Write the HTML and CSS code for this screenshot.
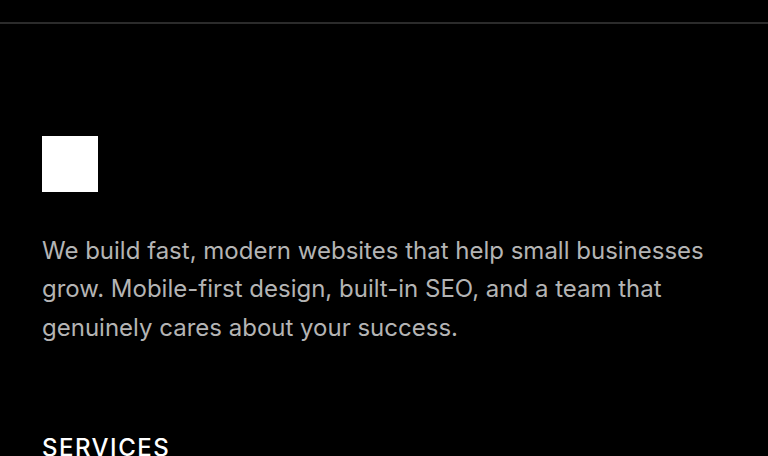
FILE: index.html
```html
<!DOCTYPE html>
<html lang="en">
<head>
    <meta charset="UTF-8">
    <meta name="viewport" content="width=device-width, initial-scale=1.0">
    <title>Footer</title>
    <link rel="stylesheet" href="styles.css">
</head>
<body>
    <div class="topbar"></div>
    <footer class="footer">
        <div class="brand">
            <div class="logo"></div>
            <p class="about">We build fast, modern websites that help small businesses grow. Mobile-first design, built-in SEO, and a team that genuinely cares about your success.</p>
        </div>
        <h3 class="col-title">SERVICES</h3>
    </footer>
</body>
</html>
```

FILE: styles.css
```css
body {
    margin: 0;
    background-color: #000;
    font-family: "Inter", "Liberation Sans", sans-serif;
    color: #fff;
}

.topbar {
    height: 22px;
    border-bottom: 2px solid #2b2b2b;
}

.footer {
    padding: 112px 42px 0;
}

.logo {
    width: 56px;
    height: 56px;
    background-color: #fff;
}

.about {
    margin: 40px 0 0;
    max-width: 680px;
    font-size: 24px;
    line-height: 38.4px;
    color: #b4b4b4;
}

.col-title {
    margin: 86px 0 0;
    font-size: 24px;
    font-weight: 500;
    letter-spacing: 1.5px;
}
```
